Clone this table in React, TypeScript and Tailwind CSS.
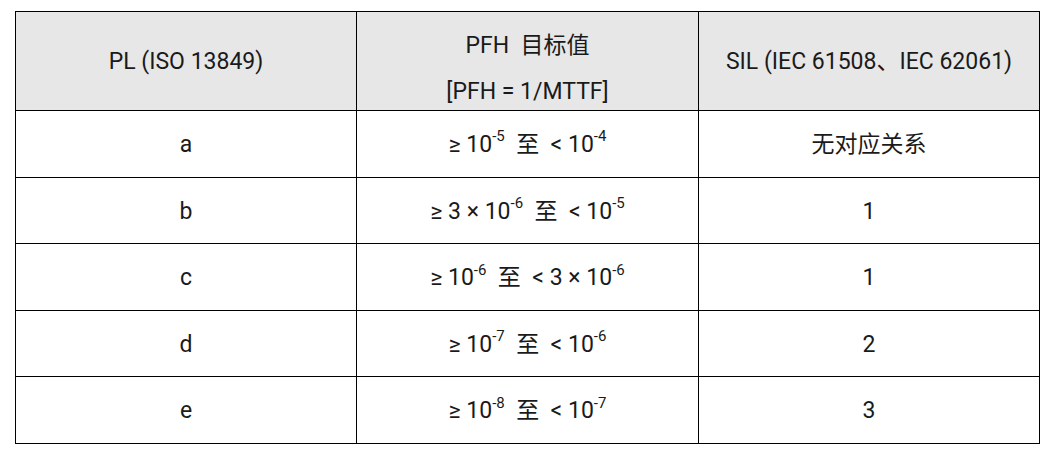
import React from 'react'

type Range = { lo: React.ReactNode; hi: React.ReactNode }

const Pow = ({ e }: { e: string }) => (
  <>
    10<sup className="relative -top-[2px] align-super text-[15px]">{e}</sup>
  </>
)

const rows: { pl: string; pfh: Range; sil: string }[] = [
  { pl: 'a', pfh: { lo: <Pow e="-5" />, hi: <Pow e="-4" /> }, sil: '无对应关系' },
  { pl: 'b', pfh: { lo: <>3 × <Pow e="-6" /></>, hi: <Pow e="-5" /> }, sil: '1' },
  { pl: 'c', pfh: { lo: <Pow e="-6" />, hi: <>3 × <Pow e="-6" /></> }, sil: '1' },
  { pl: 'd', pfh: { lo: <Pow e="-7" />, hi: <Pow e="-6" /> }, sil: '2' },
  { pl: 'e', pfh: { lo: <Pow e="-8" />, hi: <Pow e="-7" /> }, sil: '3' },
]

export default function App() {
  return (
    <div
      className="h-[454px] w-[1054px] bg-white pl-[15px] pt-[11px] text-[23px] text-[#1a1a1a]"
      style={{ fontFamily: 'Roboto, "Noto Sans CJK SC", sans-serif' }}
    >
      <table className="w-[1024px] table-fixed border-collapse text-center">
        <colgroup>
          <col className="w-[341px]" />
          <col className="w-[342px]" />
          <col className="w-[341px]" />
        </colgroup>
        <thead>
          <tr className="h-[99px] bg-[#e7e7e7]">
            <th className="border border-black pt-[2px] font-normal">PL (ISO 13849)</th>
            <th className="border border-black font-normal">
              <div className="flex flex-col gap-[16px] pt-[16px] leading-[30px]">
                <span>PFH&nbsp; 目标值</span>
                <span>[PFH = 1/MTTF]</span>
              </div>
            </th>
            <th className="border border-black pt-[2px] font-normal">SIL (IEC 61508、IEC 62061)</th>
          </tr>
        </thead>
        <tbody>
          {rows.map((r) => (
            <tr key={r.pl} className="h-[66.6px]">
              <td className="border border-black pt-[3px]">{r.pl}</td>
              <td className="border border-black pt-[3px]">
                ≥ {r.pfh.lo}&nbsp; 至&nbsp; &lt; {r.pfh.hi}
              </td>
              <td className="border border-black pt-[3px]">{r.sil}</td>
            </tr>
          ))}
        </tbody>
      </table>
    </div>
  )
}
